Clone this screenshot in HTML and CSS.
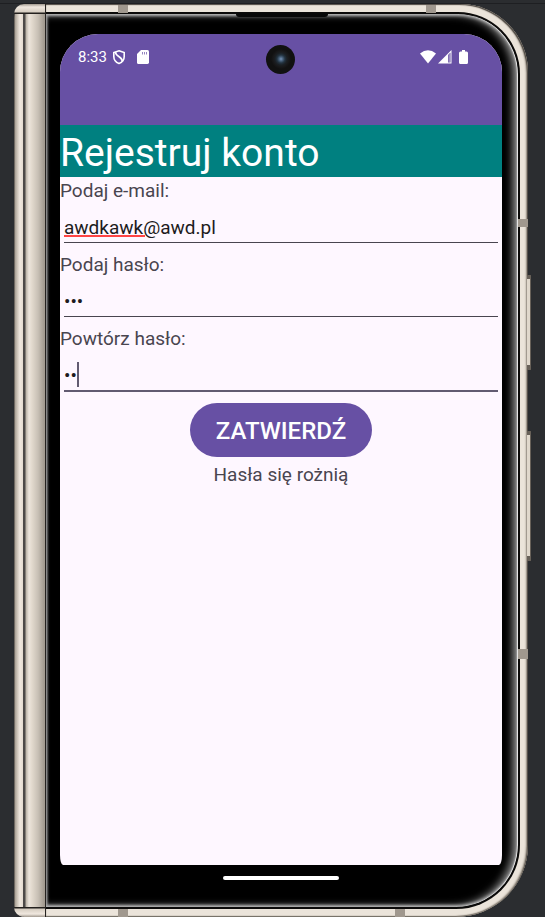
FILE: index.html
```html
<!DOCTYPE html>
<html lang="pl">
<head>
<meta charset="utf-8">
<meta name="viewport" content="width=device-width, initial-scale=1">
<title>Rejestruj konto</title>
<link rel="stylesheet" href="styles.css">
</head>
<body>
<div class="desk">
  <div class="phone">
    <div class="hinge"></div>
    <div class="frame">
      <div class="glass">
        <main class="screen">
          <div class="statusbar">
            <div class="status-group">
              <span class="clock">8:33</span>
              <svg class="shield" width="14" height="16" viewBox="0 0 14 16" fill="none" stroke="#fff" stroke-width="1.6"><path d="M7 1.800 12.200 3.500v4c0 3.200-2 5.800-5.200 7-3.200-1.200-5.200-3.800-5.200-7v-4z"/><path d="M3.500 3C3.500 8 10 7 10.500 12.500"/></svg>
              <svg class="sd" width="12" height="14" viewBox="0 0 12 14"><path fill="#fff" d="M4 0h6.500Q12 0 12 1.500v10.800Q12 14 10.500 14h-9Q0 14 0 12.500V4z"/><path stroke="#6750a4" stroke-opacity=".7" d="M5.500 2v2.500M7.500 2v2.500M9.500 2v2.500"/></svg>
            </div>
            <div class="status-group">
              <svg width="16" height="14" viewBox="0 0 16 14"><path fill="#fff" d="M0 3.500Q8-3 16 3.500L8 13.500z"/></svg>
              <svg class="signal" width="14" height="14" viewBox="0 0 14 14"><path fill="#fff" d="M13.500 0v13.500H0z"/><path fill="#6750a4" d="M10 5l2.500-2.500v10H10z"/><path fill="#fff" opacity=".35" d="M10.500 5l1.500-1.500v9h-1.500z"/></svg>
              <svg class="battery" width="9" height="14" viewBox="0 0 9 14"><path fill="#fff" d="M3 0h3v1.500h1.500Q9 1.500 9 3v9.500Q9 14 7.500 14h-6Q0 14 0 12.500V3Q0 1.500 1.500 1.500H3z"/></svg>
            </div>
            <div class="camera"></div>
          </div>
          <h1 class="title">Rejestruj konto</h1>
          <form class="form">
            <label class="label" for="email">Podaj e-mail:</label>
            <div class="field">
              <input class="input" id="email" type="text" value="awdkawk@awd.pl" spellcheck="false">
              <span class="typo"></span>
            </div>
            <label class="label" for="pass">Podaj hasło:</label>
            <div class="field"><input class="input" id="pass" type="password" value="abc"></div>
            <label class="label" for="repeat">Powtórz hasło:</label>
            <div class="field active">
              <input class="input" id="repeat" type="password" value="ab">
              <span class="caret"></span>
            </div>
            <button class="submit" type="button">ZATWIERDŹ</button>
            <p class="message">Hasła się rożnią</p>
          </form>
        </main>
        <div class="homebar"></div>
      </div>
      <i class="seam seam-tl"></i><i class="seam seam-tr"></i>
      <i class="seam seam-bl"></i><i class="seam seam-br"></i>
      <i class="band band-upper"></i><i class="band band-lower"></i>
      <i class="key power"></i><i class="key volume"></i>
      <i class="speaker"></i>
    </div>
  </div>
</div>
</body>
</html>
```
FILE: styles.css
```css
* { box-sizing: border-box; }
body {
  margin: 0;
  background: #2b2d30;
  font-family: Roboto, sans-serif;
}
.desk {
  display: flex;
  min-height: 100vh;
  padding: 1px 17px 0 14px;
  border-top: 3px solid #2b2d30;
  box-shadow: inset 0 1px #1e1f22;
}
.phone {
  flex: 1;
  display: flex;
  min-width: 0;
}
.hinge {
  position: relative;
  flex: 0 0 32px;
  border-radius: 14px 0 0 12px;
  border-right: 1px solid #25221f;
  background: linear-gradient(90deg, #39342f 0, #a69e93 1px, #c9c0b4 3px, #f0e8df 6px, #e4dbd0 9px, #4d4a48 9px, #4d4a48 11px, #bcb4a8 12px, #ece5dc 15px, #e2d9cd 18px, #c8c0b5 24px, #a39b90 30px);
}
.hinge::before, .hinge::after {
  content: "";
  position: absolute;
  left: 0;
  right: 0;
  height: 10px;
  border-radius: 14px 0 0 0;
  background: linear-gradient(#a0988e, #f0e8df 3px, #d6cdc1 8px, #24211e 9px);
}
.hinge::before { top: 0; }
.hinge::after { bottom: 0; transform: scaleY(-1); }
.frame {
  position: relative;
  flex: 1;
  display: flex;
  min-width: 0;
  padding: 8px 8px 8px 0;
  border-radius: 0 68px 72px 0;
  background: #ebe4da;
  box-shadow: inset -1px 1px 1px #4e4943, inset -2px 0 2px #968e83, inset 0 -1px 1px #625c54;
}
.glass {
  flex: 1;
  display: flex;
  flex-direction: column;
  min-width: 0;
  padding: 20px 16px 0 14px;
  border: solid #0b0a09;
  border-width: 2px 2px 2px 0;
  border-radius: 0 62px 64px 0;
  background: #000;
  box-shadow: inset -1px 0 1px #eee, inset 0 2px 3px #aaa, inset 0 -2px 3px #aaa, inset 1px 0 3px #888, inset -5px 0 9px #999;
}
.screen {
  flex: 1;
  overflow: hidden;
  border-radius: 38px 38px 3px 3px / 38px 38px 10px 10px;
  background: #fef7ff;
  color: #1d1b20;
}
.statusbar {
  position: relative;
  display: flex;
  justify-content: space-between;
  height: 91px;
  padding: 15px 34px 0 18px;
  background: #6750a4;
  color: #fff;
}
.status-group {
  display: flex;
  align-items: center;
  height: 16px;
}
.clock { font-size: 15px; line-height: 16px; }
.shield { margin-left: 5px; }
.sd { margin-left: 11px; }
.signal { margin-left: 2px; }
.battery { margin-left: 7px; }
.camera {
  position: absolute;
  top: 11px;
  left: calc(50% - 15px);
  width: 29px;
  height: 29px;
  border-radius: 50%;
  background: radial-gradient(circle at 15px 14px, #7894b8 0, #48617b 2px, #233340 4px, #1b2024 6px, #181819 8px, #111 10px);
}
.title {
  margin: 0;
  padding-top: 4px;
  background: #008080;
  color: #fff;
  font-size: 39px;
  font-weight: 400;
  line-height: 48px;
}
.form { display: flex; flex-direction: column; }
.label, .message {
  margin: 0;
  color: #49454f;
  font-size: 19px;
  line-height: 27px;
}
.field {
  position: relative;
  height: 47px;
  padding: 0 4px 8px;
}
.input {
  display: block;
  width: 100%;
  height: 39px;
  padding: 8px 0 0;
  border: 0;
  border-bottom: 1px solid #49454f;
  border-radius: 0;
  outline: 0;
  background: transparent;
  color: #1d1b20;
  font: 19px Roboto, sans-serif;
}
.active .input {
  height: 40px;
  border-bottom: 2px solid #625b71;
}
.typo {
  position: absolute;
  top: 31px;
  left: 4px;
  width: 81px;
  height: 2px;
  background: #f44;
}
.caret {
  position: absolute;
  top: 10px;
  left: 17px;
  width: 2px;
  height: 25px;
  background: #625b71;
}
.submit {
  align-self: center;
  height: 54px;
  margin: 4px 0;
  padding: 2px 26px 0;
  border: 0;
  border-radius: 27px;
  background: #6750a4;
  color: #fff;
  font: 500 24px Roboto, sans-serif;
}
.message { align-self: center; }
.homebar {
  align-self: center;
  width: 116px;
  height: 4px;
  margin: 11px 0 27px;
  border-radius: 2px;
  background: #fff;
}
.seam, .band, .key, .speaker { position: absolute; }
.seam { width: 10px; height: 8px; background: #a0988e; }
.seam-tl { top: 1px; left: 72px; }
.seam-tr { top: 1px; right: 92px; }
.seam-bl { bottom: 0; left: 72px; }
.seam-br { bottom: 0; right: 123px; }
.band { right: 0; width: 10px; height: 8px; background: #a0988e; }
.band-upper { top: 215px; }
.band-lower { top: 645px; height: 10px; }
.key {
  right: -3px;
  width: 4px;
  border: solid #686159;
  border-width: 4px 1px 5px 0;
  border-radius: 1px;
  background: #e0d8cc;
}
.power { top: 271px; height: 95px; }
.volume { top: 427px; height: 130px; }
.speaker {
  top: 9px;
  left: 190px;
  width: 92px;
  height: 4px;
  border-radius: 0 0 3px 3px;
  background: #080808;
}
```
